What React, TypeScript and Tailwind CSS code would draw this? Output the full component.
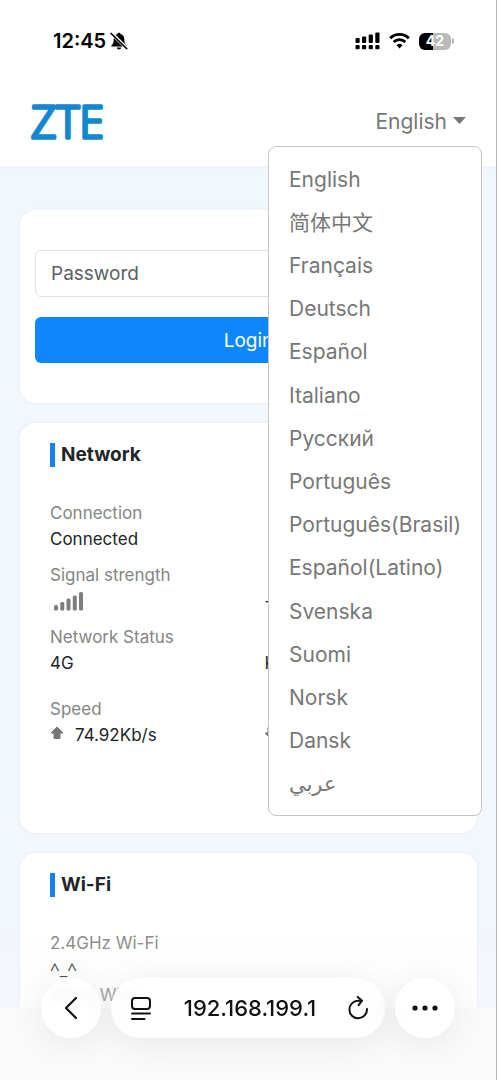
import React from 'react';
import { ChevronLeft } from 'lucide-react';

const languages = [
  { code: 'en', label: 'English' },
  { code: 'zh-CN', label: '简体中文' },
  { code: 'fr', label: 'Français' },
  { code: 'de', label: 'Deutsch' },
  { code: 'es', label: 'Español' },
  { code: 'it', label: 'Italiano' },
  { code: 'ru', label: 'Русский' },
  { code: 'pt', label: 'Português' },
  { code: 'pt-BR', label: 'Português(Brasil)' },
  { code: 'es-419', label: 'Español(Latino)' },
  { code: 'sv', label: 'Svenska' },
  { code: 'fi', label: 'Suomi' },
  { code: 'no', label: 'Norsk' },
  { code: 'da', label: 'Dansk' },
  { code: 'ar', label: 'عربي' },
];

const StatusBar: React.FC = () => (
  <div className="relative z-10 flex h-[82px] shrink-0 items-center justify-between bg-white pr-[42px] pl-[53px] text-black">
    <div className="flex items-center gap-1">
      <span className="text-[20px] leading-6 font-semibold">12:45</span>
      <svg className="h-[18px] w-[18px]" viewBox="0 0 18 18" fill="currentColor" aria-hidden="true">
        <path d="M9 .8c.9 0 1.5.6 1.6 1.3 2.4.7 3.7 2.7 3.7 5.2 0 3.5.7 4.6 2.1 5.9.6.6.3 1.4-.5 1.4H2.1c-.8 0-1.1-.8-.5-1.4C3 11.9 3.7 10.8 3.7 7.3c0-2.5 1.3-4.5 3.7-5.2C7.5 1.4 8.1.8 9 .8z" />
        <path d="M6.6 15.6h4.8c-.3 1.1-1.2 1.8-2.4 1.8s-2.1-.7-2.4-1.8z" />
        <path d="M1.4 1.2l16 15.6" stroke="white" strokeWidth="3.4" />
        <path d="M1 1.4l15.8 15.4" stroke="currentColor" strokeWidth="1.5" strokeLinecap="round" />
      </svg>
    </div>
    <div className="flex items-center gap-[9px]">
      <svg className="h-[18px] w-[25px]" viewBox="0 0 25 18" fill="currentColor" aria-hidden="true">
        <rect x="0.5" y="6" width="4.2" height="5" rx="1" />
        <rect x="7" y="4.5" width="4.2" height="6.5" rx="1" />
        <rect x="13.7" y="2.5" width="4.2" height="8.5" rx="1" />
        <rect x="20.3" y="0.5" width="4.2" height="10.5" rx="1" />
        <rect x="0.5" y="13" width="4.2" height="4.2" rx="1" />
        <rect x="7" y="13" width="4.2" height="4.2" rx="1" />
        <rect x="13.7" y="13" width="4.2" height="4.2" rx="1" />
        <rect x="20.3" y="13" width="4.2" height="4.2" rx="1" />
      </svg>
      <svg className="h-4 w-[21px]" viewBox="0 0 21 16" fill="none" stroke="currentColor" strokeWidth="2.8" aria-hidden="true">
        <path d="M1.2 5.2a13.4 13.4 0 0 1 18.6 0" />
        <path d="M4.7 9a8.4 8.4 0 0 1 11.6 0" />
        <path d="M10.5 15.5l-3-3.2a4.3 4.3 0 0 1 6 0z" fill="currentColor" stroke="none" />
      </svg>
      <div className="flex items-center gap-px">
        <div className="flex h-[17px] w-8 items-center justify-center rounded-md bg-linear-to-r from-black from-45% to-[#b9b9b9] to-45%">
          <span className="text-[14px] leading-4 font-bold text-white">42</span>
        </div>
        <div className="h-[6px] w-[2px] rounded-r-full bg-[#b9b9b9]" />
      </div>
    </div>
  </div>
);

const Logo: React.FC = () => (
  <svg className="h-16 w-20" viewBox="0 0 80 64" role="img" aria-label="ZTE">
    <text
      x="2"
      y="48"
      className="fill-[#1488cf] stroke-[#1488cf] font-['Open_Sans'] font-light"
      fontSize="44"
      strokeWidth="3.4"
      strokeLinejoin="round"
    >
      ZTE
    </text>
  </svg>
);

const LanguageMenu: React.FC = () => (
  <div className="relative">
    <button type="button" aria-haspopup="menu" aria-expanded="true" className="flex items-center gap-1.5 text-[21px] leading-8 text-[#777]">
      English
      <svg className="mb-1 h-[7px] w-[13px]" viewBox="0 0 13 7" fill="currentColor" aria-hidden="true">
        <path d="M0 0h13L6.5 7z" />
      </svg>
    </button>
    <ul className="absolute top-10 -right-4 z-20 flex h-[670px] w-[214px] flex-col justify-between rounded-lg border border-[#c6c6c6] bg-white pt-[11px] pb-[9px]">
      {languages.map((lang) => (
        <li key={lang.code}>
          <button type="button" lang={lang.code} className="block h-[43px] w-full px-5 text-left text-[21px] leading-8 whitespace-nowrap text-[#777]">
            {lang.label}
          </button>
        </li>
      ))}
    </ul>
  </div>
);

const Card: React.FC<{ children: React.ReactNode; className?: string }> = ({ children, className = '' }) => (
  <section className={`rounded-2xl bg-white shadow-[0_0_4px_rgba(0,0,0,0.05)] ${className}`}>{children}</section>
);

const CardTitle: React.FC<{ children: React.ReactNode }> = ({ children }) => (
  <h2 className="flex items-center gap-1.5 text-[19px] leading-6 font-bold text-[#212529]">
    <span className="h-6 w-[5px] bg-[#1a7ff0]" />
    {children}
  </h2>
);

const Arrow: React.FC<{ down?: boolean }> = ({ down = false }) => (
  <svg className={`mb-1 h-[14px] w-[14px] ${down ? 'rotate-180' : ''}`} viewBox="0 0 14 14" fill="#777" aria-hidden="true">
    <path d="M7 1L13 7H10v5.5H4V7H1z" stroke="#777" strokeLinejoin="round" />
  </svg>
);

const SignalBars: React.FC = () => (
  <svg className="ml-1 h-5 w-[30px]" viewBox="0 0 30 20" fill="#7d7d7d" aria-label="Signal">
    <rect x="0" y="14" width="4" height="5.5" rx="1.5" />
    <rect x="6.3" y="11" width="4" height="8.5" rx="1.5" />
    <rect x="12.5" y="7.5" width="4" height="12" rx="1.5" />
    <rect x="18.8" y="4.5" width="4" height="15" rx="1.5" />
    <rect x="25" y="1" width="4" height="18.5" rx="1.5" />
  </svg>
);

const Field: React.FC<{ label: string; value: React.ReactNode; extra?: React.ReactNode }> = ({ label, value, extra }) => (
  <div>
    <dt className="text-[#858585]">{label}</dt>
    <div className="grid grid-cols-[54%_46%]">
      <dd className="flex h-[26px] items-center">{value}</dd>
      {extra && <dd className="flex h-[26px] items-center">{extra}</dd>}
    </div>
  </div>
);

const Toolbar: React.FC = () => (
  <nav className="absolute inset-x-0 bottom-0 z-30 flex justify-center gap-[10px] bg-linear-to-b from-transparent to-[#fafafa]/60 pt-14 pb-[42px] text-[#111]">
    <button type="button" aria-label="Back" className="flex h-[60px] w-[60px] shrink-0 items-center justify-center rounded-full bg-white/85 shadow-[0_4px_36px_rgba(0,0,0,0.08)] backdrop-blur-xs">
      <ChevronLeft className="h-10 w-10" strokeWidth={1.3} />
    </button>
    <div className="flex h-[60px] w-[274px] items-center justify-between rounded-full bg-white/85 px-4 shadow-[0_4px_36px_rgba(0,0,0,0.08)] backdrop-blur-xs">
      <button type="button" aria-label="Page menu">
        <svg className="h-7 w-7" viewBox="0 0 28 28" fill="none" stroke="currentColor" strokeWidth="2" strokeLinecap="round">
          <rect x="5" y="4" width="18" height="11" rx="3" />
          <path d="M5 19.5h18M5 25h12.5" />
        </svg>
      </button>
      <span className="text-[22px] leading-6 font-medium">192.168.199.1</span>
      <button type="button" aria-label="Reload">
        <svg className="h-6 w-6" viewBox="0 0 24 24" fill="none" stroke="currentColor" strokeWidth="2" strokeLinecap="round" strokeLinejoin="round">
          <path d="M22 13a8.800 8.800 0 1 1-8.800-8.300h3.600" />
          <path d="M12.700 .9l4.300 3.800-3.400 4.500" />
        </svg>
      </button>
    </div>
    <button type="button" aria-label="More" className="flex h-[60px] w-[60px] shrink-0 items-center justify-center rounded-full bg-white/85 shadow-[0_4px_36px_rgba(0,0,0,0.08)] backdrop-blur-xs">
      <svg className="h-1.5 w-[26px]" viewBox="0 0 26 6" fill="currentColor">
        <circle cx="3" cy="3" r="2.6" />
        <circle cx="13" cy="3" r="2.6" />
        <circle cx="23" cy="3" r="2.6" />
      </svg>
    </button>
  </nav>
);

export default function App() {
  return (
    <div className="relative flex h-dvh flex-col overflow-hidden border-r border-[#b4b4b8] bg-[#fafafa] font-[Inter,'Noto_Sans_CJK_SC','DejaVu_Sans',sans-serif]">
      <StatusBar />
      <div className="flex min-h-0 flex-1 flex-col bg-[#f2f6fd]">
        <header className="flex h-[84px] shrink-0 items-center justify-between bg-white pr-[30px] pb-1 pl-[29px] shadow-[0_0_4px_rgba(0,0,0,0.05)]">
          <Logo />
          <LanguageMenu />
        </header>

        <main className="min-h-0 flex-1 space-y-5 overflow-hidden pt-11 pr-[19px] pl-5">
          <Card className="px-[15px] py-10">
            <form className="space-y-5" onSubmit={(e) => e.preventDefault()}>
              <input
                type="password"
                placeholder="Password"
                aria-label="Password"
                className="block h-[47px] w-full rounded-md border border-[#dee2e6] px-[15px] text-[19px] text-[#555] placeholder:text-[#5c6064]"
              />
              <button type="submit" className="block h-[46px] w-full rounded-md bg-[#0d87fb] pt-0.5 text-[19px] text-white">
                Login
              </button>
            </form>
          </Card>

          <Card className="px-[30px] pt-5 pb-[85px]">
            <CardTitle>Network</CardTitle>
            <dl className="mt-[33px] space-y-[10px] text-[17px] leading-[26px] text-[#212529]">
              <Field label="Connection" value="Connected" />
              <Field label="Signal strength" value={<SignalBars />} extra="-" />
              <Field label="Network Status" value="4G" extra="K" />
              <div className="pt-[10px]">
                <Field
                  label="Speed"
                  value={
                    <span className="flex items-center gap-[11px]">
                      <Arrow />
                      74.92Kb/s
                    </span>
                  }
                  extra={<Arrow down />}
                />
              </div>
            </dl>
          </Card>

          <Card className="px-[30px] pt-5 pb-10">
            <CardTitle>Wi-Fi</CardTitle>
            <dl className="mt-[33px] text-[17px] leading-[26px] text-[#212529]">
              <Field label="2.4GHz Wi-Fi" value={<span className="font-['Noto_Sans']">^_^</span>} />
              <Field label="5GHz Wi-Fi" value="" />
            </dl>
          </Card>
        </main>
      </div>
      <div className="h-[72px] shrink-0" />
      <Toolbar />
    </div>
  );
}
